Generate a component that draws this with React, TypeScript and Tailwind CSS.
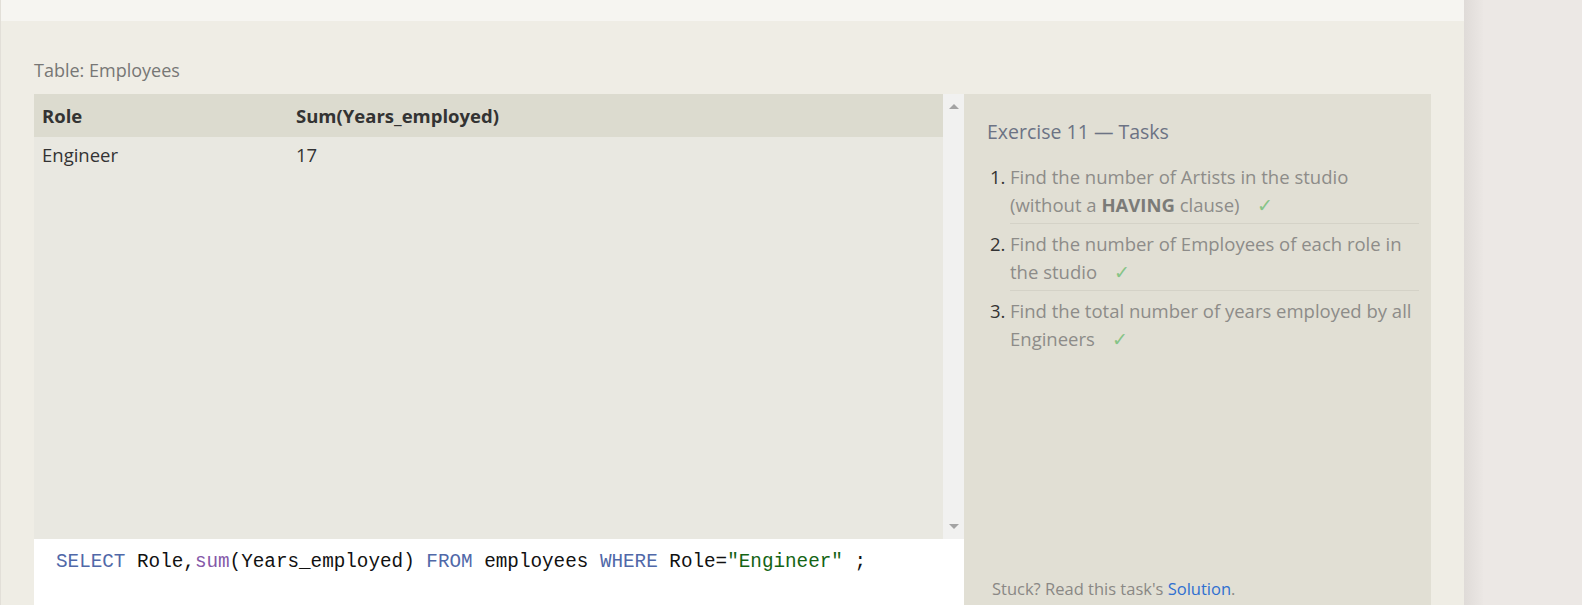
import React from 'react';

const tasks = [
  {
    n: 1,
    body: (
      <>
        Find the number of Artists in the studio (without a <b className="font-bold text-[#7b7b78]">HAVING</b> clause)
      </>
    ),
  },
  { n: 2, body: <>Find the number of Employees of each role in the studio</> },
  { n: 3, body: <>Find the total number of years employed by all Engineers</> },
];

function Check() {
  return <span className="ml-[17px] text-[#86c486]">✓</span>;
}

export default function App() {
  return (
    <div className="flex h-[605px] w-full overflow-hidden bg-[#ece8e5] font-['Open_Sans',sans-serif]">
      <div className="flex w-[1464px] shrink-0 flex-col border-l border-[#e2dfd8]">
        <div className="h-[21px] shrink-0 bg-[#f6f5f1]" />
        <div className="min-h-0 flex-1 overflow-hidden bg-[#efede5] pl-[33px] pt-[37px]">
          <div className="mb-[12px] text-[18px] leading-[24px] text-[#777775]">Table: Employees</div>
          <div className="flex">
            <div className="flex w-[930px] flex-col">
              <div className="flex h-[445px]">
                <div className="flex-1 bg-[#e9e8e1] text-[18.5px] text-[#333]">
                  <div className="flex h-[43px] items-center bg-[#dcdbcf] pl-[8px] font-bold">
                    <div className="w-[254px]">Role</div>
                    <div>Sum(Years_employed)</div>
                  </div>
                  <div className="flex pl-[8px] pt-[6px] leading-[24px]">
                    <div className="w-[254px]">Engineer</div>
                    <div>17</div>
                  </div>
                </div>
                <div className="flex w-[21px] flex-col items-center justify-between bg-[#f1f1f0] py-[10px]">
                  <div className="h-0 w-0 border-x-[5px] border-b-[5px] border-x-transparent border-b-[#a3a3a3]" />
                  <div className="h-0 w-0 border-x-[5px] border-t-[5px] border-x-transparent border-t-[#a3a3a3]" />
                </div>
              </div>
              <div className="h-[80px] bg-white pl-[22px] pt-[9px] font-['Liberation_Mono',monospace] text-[19.3px] leading-[28px] text-[#111]">
                <span className="text-[#5068a8]">SELECT</span> Role,<span className="text-[#8458a8]">sum</span>(Years_employed){' '}
                <span className="text-[#5068a8]">FROM</span> employees <span className="text-[#5068a8]">WHERE</span> Role=
                <span className="text-[#146414]">"Engineer"</span> ;
              </div>
            </div>
            <div className="flex h-[530px] w-[467px] flex-col bg-[#e1dfd4] pl-[23px] pr-[12px] pt-[24px]">
              <div className="text-[19.5px] leading-[28px] text-[#6c7384]">Exercise 11 — Tasks</div>
              <ol className="mt-[11px] text-[18.5px] leading-[28px] text-[#8d8c89]">
                {tasks.map((t, i) => (
                  <li key={t.n} className="flex">
                    <span className="w-[23px] shrink-0 pl-[3px] pt-[6px] text-[#333]">{t.n}.</span>
                    <div
                      className={
                        'flex-1 pt-[6px] pb-[4px] ' + (i < tasks.length - 1 ? 'border-b border-[#d4d2c7]' : '')
                      }
                    >
                      {t.body}
                      <Check />
                    </div>
                  </li>
                ))}
              </ol>
              <div className="mt-auto pb-[23px] pl-[5px] text-[16.5px] leading-[24px] text-[#8a8885]">
                Stuck? Read this task's <a className="text-[#2f6fd0]">Solution</a>.
              </div>
            </div>
          </div>
        </div>
      </div>
      <div className="w-[19px] bg-gradient-to-r from-[#dfdbd8] to-[#ebe7e4]" />
    </div>
  );
}
